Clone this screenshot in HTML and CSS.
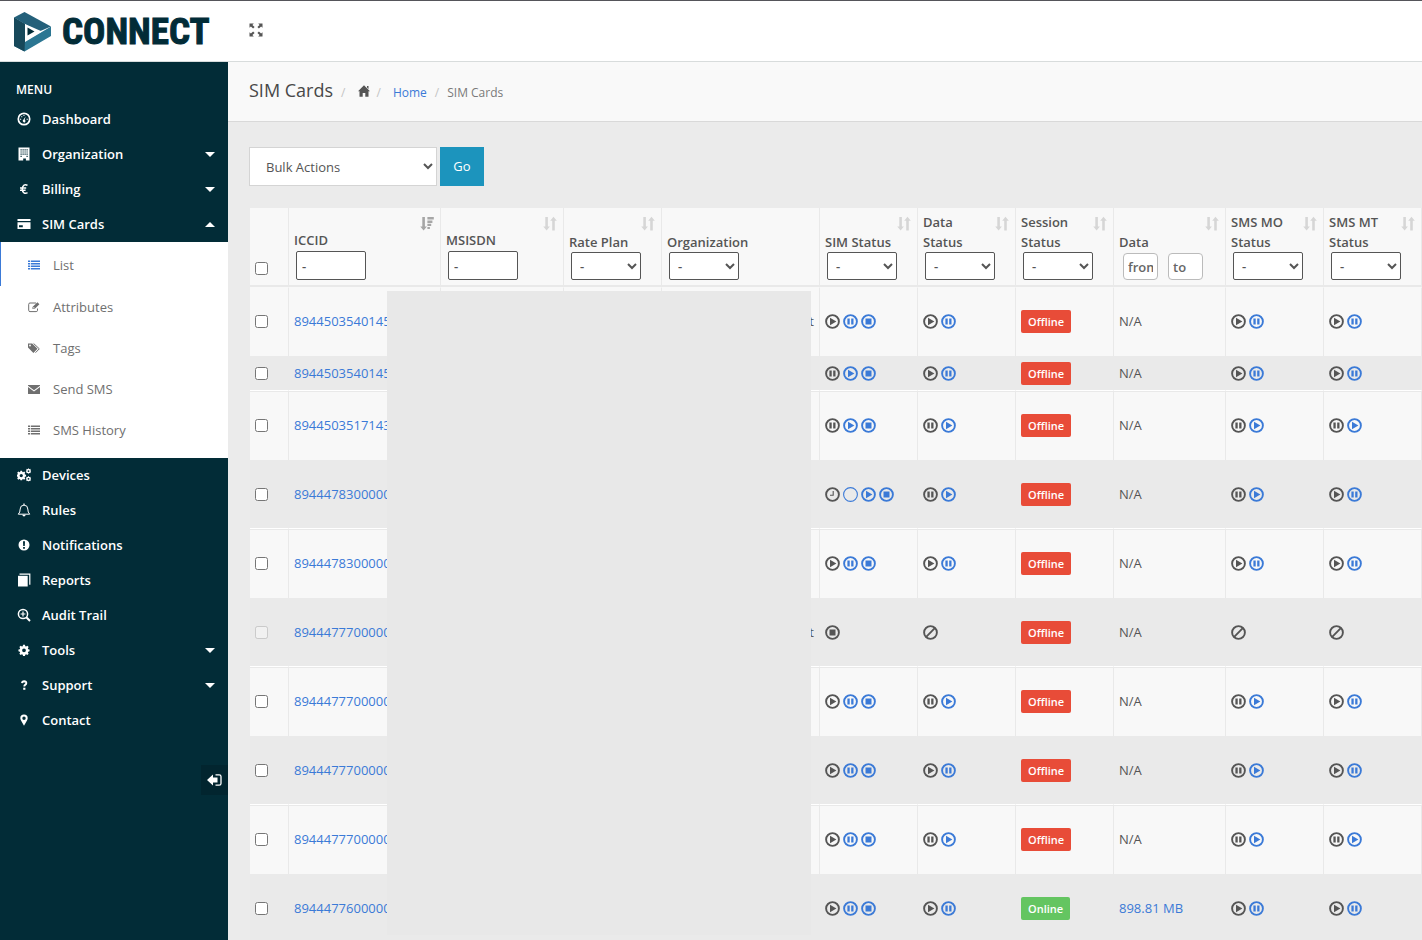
FILE: index.html
```html
<!DOCTYPE html>
<html lang="en">
<head>
<meta charset="utf-8">
<title>SIM Cards</title>
<link rel="stylesheet" href="styles.css">
</head>
<body>
<svg class="sprite" aria-hidden="true">
  <symbol id="play" viewBox="0 0 15 15"><circle cx="7.5" cy="7.5" r="6.4" fill="none" stroke="currentColor" stroke-width="1.9"/><path d="M5 3.8L11.4 7.5L5 11.2z"/></symbol>
  <symbol id="pause" viewBox="0 0 15 15"><circle cx="7.5" cy="7.5" r="6.4" fill="none" stroke="currentColor" stroke-width="1.9"/><path d="M4.4 4.6h2.3v5.8H4.4zM8.2 4.6h2.3v5.8H8.2z"/></symbol>
  <symbol id="stop" viewBox="0 0 15 15"><circle cx="7.5" cy="7.5" r="6.4" fill="none" stroke="currentColor" stroke-width="1.9"/><path d="M4.5 4.5h6v6h-6z"/></symbol>
  <symbol id="ring" viewBox="0 0 15 15"><circle cx="7.5" cy="7.5" r="6.9" fill="none" stroke="currentColor" stroke-width="1.1"/></symbol>
  <symbol id="clock" viewBox="0 0 15 15"><circle cx="7.5" cy="7.5" r="6.4" fill="none" stroke="currentColor" stroke-width="1.9"/><path d="M8.2 4v4.3H5" fill="none" stroke="currentColor" stroke-width="1.1"/></symbol>
  <symbol id="ban" viewBox="0 0 15 15"><circle cx="7.5" cy="7.5" r="6.4" fill="none" stroke="currentColor" stroke-width="1.9"/><path d="M3.2 11.8L11.8 3.2" stroke="currentColor" stroke-width="1.9"/></symbol>
  <symbol id="sort" viewBox="0 0 14 15"><path d="M2.3 1h2.6v9.6h2L3.6 14.6L.3 10.6h2zM9.2 14.4h2.6V4.8h2L10.5.8L7.2 4.8h2z"/></symbol>
  <symbol id="sorted" viewBox="0 0 14 15"><path d="M2.3 1h2.6v9.6h2L3.6 14.6L.3 10.6h2zM7.4 1h6.4v2.6H7.4zM7.4 4.4h5v2.5h-5zM7.4 7.7h3.8v2.4H7.4zM7.4 10.9h2.5v2.2H7.4z"/></symbol>
  <symbol id="list" viewBox="0 0 12 10"><path d="M0 .5h2v1.5H0zM0 3h2v1.5H0zM0 5.5h2V7H0zM0 8h2v1.5H0zM2.8.5H12V2H2.8zM2.8 3H12v1.5H2.8zM2.8 5.5H12V7H2.8zM2.8 8H12v1.5H2.8z"/></symbol>
  <symbol id="gear" viewBox="0 0 14 14"><path fill-rule="evenodd" d="M5.9 1h2.2l.4 1.6.9.4 1.5-.9 1.5 1.5-.9 1.5.4.9 1.6.4v2.2l-1.6.4-.4.9.9 1.5-1.5 1.5-1.5-.9-.9.4L8.100 14H5.900l-.4-1.600-.9-.4-1.500.9-1.500-1.500.9-1.500-.4-.9L.5 8.600V6.400L2.100 6l.4-.9-.9-1.500 1.500-1.500 1.500.9.9-.4zM7 5.200a2.200 2.200 0 1 0 0 4.400a2.200 2.200 0 0 0 0-4.400z"/></symbol>
</svg>

<header class="topbar">
  <a class="brand" href="#">
    <svg class="brand-mark" viewBox="0 0 37 40" aria-hidden="true">
      <path d="M0 5.500L10.500 0L37 14.500L24 20z" fill="#24607a"/>
      <path d="M0 5.500L11 12v18L37 14.500V24L10.500 39.500L0 34z" fill="#2b7692"/>
      <path d="M0 5.500L11 12v16.500L10.500 39.500L0 34z" fill="#17485a"/>
      <path d="M11 12L28 19.500L11 29z" fill="#fff"/>
      <path d="M13.500 15.500L20.500 19.500L13.500 23.500z" fill="#022c37"/>
    </svg>
    <span class="brand-name">CONNECT</span>
  </a>
  <button class="expand" type="button" aria-label="Full screen">
    <svg width="14" height="14" viewBox="0 0 14 14" aria-hidden="true"><path d="M.5.5h4.300L3.400 1.900L5.600 4.100L4.100 5.600L1.900 3.400L.5 4.800zM13.500.5v4.300L12.100 3.400L9.900 5.600L8.400 4.100L10.600 1.900L9.200.5zM.5 13.500V9.200L1.900 10.600L4.100 8.400L5.600 9.900L3.400 12.100L4.800 13.500zM13.500 13.500H9.200L10.600 12.100L8.400 9.900L9.900 8.400L12.100 10.600L13.500 9.200z"/></svg>
  </button>
</header>

<div class="shell">
  <nav class="sidebar">
    <p class="menu-title">MENU</p>
    <a class="item" href="#"><svg viewBox="0 0 14 14"><circle cx="7" cy="7" r="5.700" fill="none" stroke="currentColor" stroke-width="1.700"/><path d="M6.200 9.700a1.200 1.200 0 1 0 1.500-1.700L8.600 4.300L6.700 7.600a1.200 1.200 0 0 0-.5 2.100z"/><path d="M3 6.800h1.200v1H3zM4.200 4.200h1.100v1.100H4.200zM6.400 3h1.100v1H6.400zM9.600 6.800h1.200v1H9.600z"/></svg><span>Dashboard</span></a>
    <a class="item" href="#"><svg viewBox="0 0 14 14"><path fill-rule="evenodd" d="M1.500.5h11v13h-3.600v-2H6.200v2H1.500zM3.500 2.200v1.200h1.200V2.200zM5.500 2.200v1.200h1.200V2.200zM7.500 2.200v1.200h1.200V2.200zM9.500 2.200v1.200h1.200V2.200zM3.500 4.400v1.200h1.200V4.400zM5.500 4.400v1.200h1.200V4.400zM7.500 4.400v1.200h1.200V4.400zM9.500 4.400v1.200h1.200V4.400zM3.500 6.600v1.200h1.200V6.600zM5.500 6.600v1.200h1.200V6.600zM7.500 6.600v1.200h1.200V6.600zM9.500 6.600v1.200h1.200V6.600zM3.500 8.800V10h1.200V8.800zM9.500 8.800V10h1.200V8.800z"/></svg><span>Organization</span><i class="caret"></i></a>
    <a class="item" href="#"><svg viewBox="0 0 14 14"><path d="M10.500 3.400C8 1.700 5.600 3 5.200 6.900C5.400 11 8 12.200 10.500 10.700M3 5.900h6.200M3 8.200h5.600" fill="none" stroke="currentColor" stroke-width="1.500"/></svg><span>Billing</span><i class="caret"></i></a>
    <a class="item" href="#"><svg viewBox="0 0 14 14"><path fill-rule="evenodd" d="M.5 2h13v2H.5zM.5 5.300h13V12H.5zM2 8.300v2h3.800v-2z"/></svg><span>SIM Cards</span><i class="caret up"></i></a>
    <div class="submenu">
      <a class="sub active" href="#"><svg viewBox="0 0 12 12"><use href="#list" y="1" width="12" height="10"/></svg><span>List</span></a>
      <a class="sub" href="#"><svg viewBox="0 0 12 12"><path d="M8 2H2Q.7 2 .7 3.300v6Q.7 10.600 2 10.600h6.200q1.300 0 1.300-1.300V7.500" fill="none" stroke="currentColor"/><path fill-rule="evenodd" d="M4.500 6L9.400 1.200l2 2L6.600 8.100H4.500zM5.300 6.400v1h1l.5-.5-1-1z"/></svg><span>Attributes</span></a>
      <a class="sub" href="#"><svg viewBox="0 0 12 12"><path fill-rule="evenodd" d="M0 1.500h4.200L9.500 6.700L5.400 10.900L0 5.600zM2 2.600a.9.9 0 1 0 0 1.800a.9.900 0 0 0 0-1.800z"/><path d="M5.600 1.500l5.700 5.300L7.500 10.700" fill="none" stroke="currentColor"/></svg><span>Tags</span></a>
      <a class="sub" href="#"><svg viewBox="0 0 12 12"><path d="M0 2h12v.8L6 7.200L0 2.800zM0 4l6 4.400L12 4v6.500q0 .5-.5.500H.5Q0 11 0 10.500z"/></svg><span>Send SMS</span></a>
      <a class="sub" href="#"><svg viewBox="0 0 12 12"><use href="#list" y="1" width="12" height="10"/></svg><span>SMS History</span></a>
    </div>
    <a class="item" href="#"><svg viewBox="0 0 14 14"><use href="#gear" x="-1" y="2" width="10.500" height="10.500"/><use href="#gear" x="8.600" y="0" width="5.800" height="5.800"/><use href="#gear" x="8.600" y="7.800" width="5.800" height="5.800"/></svg><span>Devices</span></a>
    <a class="item" href="#"><svg viewBox="0 0 14 14"><path d="M1.300 11.200Q3.200 9.500 3.200 6Q3.200 2.300 7 2.100Q10.800 2.300 10.800 6Q10.800 9.500 12.700 11.200z" fill="none" stroke="currentColor"/><path d="M6.400.6h1.200v1.600H6.400zM5.300 11.700h3.400Q8.400 13.400 7 13.400T5.300 11.700z"/></svg><span>Rules</span></a>
    <a class="item" href="#"><svg viewBox="0 0 14 14"><path fill-rule="evenodd" d="M7 1.500a5.500 5.500 0 1 0 0 11a5.500 5.500 0 0 0 0-11zM6 3.200h2L7.800 8H6.200zM6.100 9h1.800v1.700H6.100z"/></svg><span>Notifications</span></a>
    <a class="item" href="#"><svg viewBox="0 0 14 14"><path d="M1 2.800h9.700v10.700H1z"/><path d="M2.500 1.200h10.300v10.600" fill="none" stroke="currentColor" stroke-width="1.200"/></svg><span>Reports</span></a>
    <a class="item" href="#"><svg viewBox="0 0 14 14"><circle cx="6" cy="6" r="4.600" fill="none" stroke="currentColor" stroke-width="1.500"/><path d="M9.300 9.300L13 13" stroke="currentColor" stroke-width="2"/><path d="M6 3.600v4.800M3.600 6h4.800" stroke="currentColor" stroke-width="1.200"/></svg><span>Audit Trail</span></a>
    <a class="item" href="#"><svg viewBox="0 0 14 14"><use href="#gear" x="1" y="1" width="12" height="12"/></svg><span>Tools</span><i class="caret"></i></a>
    <a class="item" href="#"><svg viewBox="0 0 14 14"><path d="M5 5.100Q5.200 3.300 7.200 3.300Q9.400 3.400 9.300 5.100Q9.200 6.200 8.100 6.900Q7.300 7.400 7.300 8.600" fill="none" stroke="currentColor" stroke-width="1.900"/><path d="M6.200 9.700h2.200v2.100H6.200z"/></svg><span>Support</span><i class="caret"></i></a>
    <a class="item" href="#"><svg viewBox="0 0 14 14"><path fill-rule="evenodd" d="M7 1.500a3.700 3.700 0 0 0-3.700 3.700Q3.300 6.300 4 7.500L7 12.700L10 7.500q.7-1.200.7-2.300A3.700 3.700 0 0 0 7 1.500zM7 3.500a1.700 1.700 0 1 1 0 3.400a1.700 1.700 0 0 1 0-3.400z"/></svg><span>Contact</span></a>
    <button class="collapse" type="button" aria-label="Collapse menu"><svg width="15" height="12" viewBox="0 0 15 12" aria-hidden="true"><path d="M0 6L6 .5v3h4.500v5H6v3z"/><path d="M8.500.8h3.700q1.800 0 1.800 1.800v6.800q0 1.800-1.800 1.800H8.500" fill="none" stroke="currentColor" stroke-width="1.300"/></svg></button>
  </nav>

  <main class="main">
    <div class="heading">
      <h1>SIM Cards</h1>
      <nav class="crumbs">
        <span class="sep">/</span>
        <svg class="home" width="12" height="12" viewBox="0 0 12 12" aria-hidden="true"><path d="M6 .3L12 6.300H10.500V11.700H7.300V8H4.700v3.700H1.500V6.300H0zM9 1h1.500v3L9 2.500z"/></svg>
        <span class="sep">/</span>
        <a class="home-link" href="#">Home</a>
        <span class="sep">/</span>
        <span>SIM Cards</span>
      </nav>
    </div>

    <div class="content">
      <form class="bulk">
        <select aria-label="Bulk Actions"><option>Bulk Actions</option></select>
        <button type="button">Go</button>
      </form>

      <div class="table-wrap">
      <table>
        <colgroup><col class="c-check"><col class="c-iccid"><col class="c-msisdn"><col class="c-std"><col class="c-org"><col class="c-std"><col class="c-std"><col class="c-std"><col class="c-data"><col class="c-std"><col class="c-std"></colgroup>
        <thead>
          <tr>
            <th><input class="all" type="checkbox" aria-label="All"></th>
            <th><div class="head short"><label for="f1">ICCID</label><svg class="on"><use href="#sorted"/></svg></div><input id="f1" class="text" value="-"></th>
            <th><div class="head short"><label for="f2">MSISDN</label><svg><use href="#sort"/></svg></div><input id="f2" class="text" value="-"></th>
            <th><div class="head"><label for="f3">Rate Plan</label><svg><use href="#sort"/></svg></div><select id="f3"><option>-</option></select></th>
            <th><div class="head"><label for="f4">Organization</label></div><select id="f4"><option>-</option></select></th>
            <th><div class="head"><label for="f5">SIM Status</label><svg><use href="#sort"/></svg></div><select id="f5"><option>-</option></select></th>
            <th><div class="head"><label for="f6">Data<br>Status</label><svg><use href="#sort"/></svg></div><select id="f6"><option>-</option></select></th>
            <th><div class="head"><label for="f7">Session<br>Status</label><svg><use href="#sort"/></svg></div><select id="f7"><option>-</option></select></th>
            <th><div class="head"><label for="f8">Data</label><svg><use href="#sort"/></svg></div><div class="range"><input id="f8" placeholder="from"><input aria-label="to" placeholder="to"></div></th>
            <th><div class="head"><label for="f9">SMS MO<br>Status</label><svg><use href="#sort"/></svg></div><select id="f9"><option>-</option></select></th>
            <th><div class="head"><label for="f10">SMS MT<br>Status</label><svg><use href="#sort"/></svg></div><select id="f10"><option>-</option></select></th>
          </tr>
        </thead>
        <tbody>
          <tr>
            <td><input type="checkbox" aria-label="8944503540145"></td><td><a href="#">8944503540145</a></td><td></td><td></td><td class="org">t</td>
            <td><div class="acts"><svg><use href="#play"/></svg><svg class="b"><use href="#pause"/></svg><svg class="b"><use href="#stop"/></svg></div></td>
            <td><div class="acts"><svg><use href="#play"/></svg><svg class="b"><use href="#pause"/></svg></div></td>
            <td><span class="badge">Offline</span></td><td>N/A</td>
            <td><div class="acts"><svg><use href="#play"/></svg><svg class="b"><use href="#pause"/></svg></div></td>
            <td><div class="acts"><svg><use href="#play"/></svg><svg class="b"><use href="#pause"/></svg></div></td>
          </tr>
          <tr class="low">
            <td><input type="checkbox" aria-label="8944503540145"></td><td><a href="#">8944503540145</a></td><td></td><td></td><td></td>
            <td><div class="acts"><svg><use href="#pause"/></svg><svg class="b"><use href="#play"/></svg><svg class="b"><use href="#stop"/></svg></div></td>
            <td><div class="acts"><svg><use href="#play"/></svg><svg class="b"><use href="#pause"/></svg></div></td>
            <td><span class="badge">Offline</span></td><td>N/A</td>
            <td><div class="acts"><svg><use href="#play"/></svg><svg class="b"><use href="#pause"/></svg></div></td>
            <td><div class="acts"><svg><use href="#play"/></svg><svg class="b"><use href="#pause"/></svg></div></td>
          </tr>
          <tr>
            <td><input type="checkbox" aria-label="8944503517143"></td><td><a href="#">8944503517143</a></td><td></td><td></td><td></td>
            <td><div class="acts"><svg><use href="#pause"/></svg><svg class="b"><use href="#play"/></svg><svg class="b"><use href="#stop"/></svg></div></td>
            <td><div class="acts"><svg><use href="#pause"/></svg><svg class="b"><use href="#play"/></svg></div></td>
            <td><span class="badge">Offline</span></td><td>N/A</td>
            <td><div class="acts"><svg><use href="#pause"/></svg><svg class="b"><use href="#play"/></svg></div></td>
            <td><div class="acts"><svg><use href="#pause"/></svg><svg class="b"><use href="#play"/></svg></div></td>
          </tr>
          <tr>
            <td><input type="checkbox" aria-label="8944478300000"></td><td><a href="#">8944478300000</a></td><td></td><td></td><td></td>
            <td><div class="acts"><svg><use href="#clock"/></svg><svg class="b"><use href="#ring"/></svg><svg class="b"><use href="#play"/></svg><svg class="b"><use href="#stop"/></svg></div></td>
            <td><div class="acts"><svg><use href="#pause"/></svg><svg class="b"><use href="#play"/></svg></div></td>
            <td><span class="badge">Offline</span></td><td>N/A</td>
            <td><div class="acts"><svg><use href="#pause"/></svg><svg class="b"><use href="#play"/></svg></div></td>
            <td><div class="acts"><svg><use href="#play"/></svg><svg class="b"><use href="#pause"/></svg></div></td>
          </tr>
          <tr>
            <td><input type="checkbox" aria-label="8944478300000"></td><td><a href="#">8944478300000</a></td><td></td><td></td><td></td>
            <td><div class="acts"><svg><use href="#play"/></svg><svg class="b"><use href="#pause"/></svg><svg class="b"><use href="#stop"/></svg></div></td>
            <td><div class="acts"><svg><use href="#play"/></svg><svg class="b"><use href="#pause"/></svg></div></td>
            <td><span class="badge">Offline</span></td><td>N/A</td>
            <td><div class="acts"><svg><use href="#play"/></svg><svg class="b"><use href="#pause"/></svg></div></td>
            <td><div class="acts"><svg><use href="#play"/></svg><svg class="b"><use href="#pause"/></svg></div></td>
          </tr>
          <tr>
            <td><input type="checkbox" disabled aria-label="8944477700000"></td><td><a href="#">8944477700000</a></td><td></td><td></td><td class="org">t</td>
            <td><div class="acts"><svg><use href="#stop"/></svg></div></td>
            <td><div class="acts"><svg><use href="#ban"/></svg></div></td>
            <td><span class="badge">Offline</span></td><td>N/A</td>
            <td><div class="acts"><svg><use href="#ban"/></svg></div></td>
            <td><div class="acts"><svg><use href="#ban"/></svg></div></td>
          </tr>
          <tr>
            <td><input type="checkbox" aria-label="8944477700000"></td><td><a href="#">8944477700000</a></td><td></td><td></td><td></td>
            <td><div class="acts"><svg><use href="#play"/></svg><svg class="b"><use href="#pause"/></svg><svg class="b"><use href="#stop"/></svg></div></td>
            <td><div class="acts"><svg><use href="#pause"/></svg><svg class="b"><use href="#play"/></svg></div></td>
            <td><span class="badge">Offline</span></td><td>N/A</td>
            <td><div class="acts"><svg><use href="#pause"/></svg><svg class="b"><use href="#play"/></svg></div></td>
            <td><div class="acts"><svg><use href="#play"/></svg><svg class="b"><use href="#pause"/></svg></div></td>
          </tr>
          <tr>
            <td><input type="checkbox" aria-label="8944477700000"></td><td><a href="#">8944477700000</a></td><td></td><td></td><td></td>
            <td><div class="acts"><svg><use href="#play"/></svg><svg class="b"><use href="#pause"/></svg><svg class="b"><use href="#stop"/></svg></div></td>
            <td><div class="acts"><svg><use href="#play"/></svg><svg class="b"><use href="#pause"/></svg></div></td>
            <td><span class="badge">Offline</span></td><td>N/A</td>
            <td><div class="acts"><svg><use href="#pause"/></svg><svg class="b"><use href="#play"/></svg></div></td>
            <td><div class="acts"><svg><use href="#play"/></svg><svg class="b"><use href="#pause"/></svg></div></td>
          </tr>
          <tr>
            <td><input type="checkbox" aria-label="8944477700000"></td><td><a href="#">8944477700000</a></td><td></td><td></td><td></td>
            <td><div class="acts"><svg><use href="#play"/></svg><svg class="b"><use href="#pause"/></svg><svg class="b"><use href="#stop"/></svg></div></td>
            <td><div class="acts"><svg><use href="#pause"/></svg><svg class="b"><use href="#play"/></svg></div></td>
            <td><span class="badge">Offline</span></td><td>N/A</td>
            <td><div class="acts"><svg><use href="#pause"/></svg><svg class="b"><use href="#play"/></svg></div></td>
            <td><div class="acts"><svg><use href="#pause"/></svg><svg class="b"><use href="#play"/></svg></div></td>
          </tr>
          <tr>
            <td><input type="checkbox" aria-label="8944477600000"></td><td><a href="#">8944477600000</a></td><td></td><td></td><td></td>
            <td><div class="acts"><svg><use href="#play"/></svg><svg class="b"><use href="#pause"/></svg><svg class="b"><use href="#stop"/></svg></div></td>
            <td><div class="acts"><svg><use href="#play"/></svg><svg class="b"><use href="#pause"/></svg></div></td>
            <td><span class="badge online">Online</span></td><td><a href="#">898.81 MB</a></td>
            <td><div class="acts"><svg><use href="#play"/></svg><svg class="b"><use href="#pause"/></svg></div></td>
            <td><div class="acts"><svg><use href="#play"/></svg><svg class="b"><use href="#pause"/></svg></div></td>
          </tr>
        </tbody>
      </table>
      <div class="cover"></div>
      </div>
    </div>
  </main>
</div>
</body>
</html>
```

FILE: styles.css
```css
* { box-sizing: border-box; }

body {
  margin: 0;
  height: 100vh;
  overflow: hidden;
  display: flex;
  flex-direction: column;
  background: #ebebeb;
  color: #555;
  font: 13px/20px "Open Sans", "Noto Sans", sans-serif;
}

a { color: #3b7ad7; text-decoration: none; }
svg { fill: currentColor; flex: none; }
button, input, select { font: inherit; color: inherit; }
button { border: 0; cursor: pointer; }
.sprite { position: absolute; width: 0; height: 0; }

/* Top bar */
.topbar {
  flex: none;
  display: flex;
  align-items: center;
  height: 62px;
  border-top: 1px solid #55555a;
  border-bottom: 1px solid #d8dcdc;
  background: #fff;
}
.brand {
  display: flex;
  align-items: center;
  gap: 11px;
  width: 228px;
  padding: 2px 0 0 14px;
  color: #022c37;
}
.brand-mark { width: 37px; height: 40px; }
.brand-name {
  font: bold 37px/40px "Liberation Sans Narrow", "Roboto Condensed", "DejaVu Sans Condensed", sans-serif;
  -webkit-text-stroke: 1px #022c37;
}
.expand {
  display: flex;
  margin-left: 21px;
  padding: 0 0 2px;
  background: none;
  color: #555;
}

/* Sidebar */
.shell { flex: 1; display: flex; min-height: 0; }
.sidebar {
  flex: none;
  display: flex;
  flex-direction: column;
  width: 228px;
  background: #022c37;
  color: #fff;
}
.menu-title { margin: 18px 0 2px 16px; font-size: 12px; font-weight: 600; }
.item {
  display: flex;
  align-items: center;
  height: 35px;
  padding: 0 13px 2px 17px;
  color: #fff;
  font-weight: 600;
}
.item svg { width: 14px; height: 14px; margin-right: 11px; }
.caret {
  margin: 2px 0 0 auto;
  border: 5px solid transparent;
  border-top-color: #fff;
  border-bottom: 0;
}
.caret.up { border-top: 0; border-bottom: 5px solid #fff; }
.submenu { padding-bottom: 8px; background: #fff; }
.sub {
  display: flex;
  align-items: center;
  height: 41px;
  padding-left: 28px;
  color: #6f6f6f;
}
.sub svg { width: 12px; height: 12px; margin-right: 13px; }
.sub.active { height: 44px; padding: 2px 0 0 27px; border-left: 1px solid #3b7ad7; }
.sub.active svg { color: #3b7ad7; }
.collapse {
  display: flex;
  align-items: center;
  justify-content: center;
  align-self: flex-end;
  width: 27px;
  height: 30px;
  margin-top: 27px;
  padding: 0;
  background: #02252f;
  color: #fff;
}

/* Page heading */
.main { flex: 1; min-width: 0; overflow: hidden; }
.heading {
  display: flex;
  align-items: baseline;
  gap: 8px;
  height: 60px;
  padding: 16px 21px 0;
  border-bottom: 1px solid #d9d9d9;
  background: #f9f9f9;
}
h1 { margin: 0; color: #484848; font-size: 18px; font-weight: 400; line-height: 24px; }
.crumbs { display: flex; align-items: baseline; gap: 8px; color: #7a7a7a; font-size: 12px; }
.sep { color: #c4c4c4; }
.home { margin: 0 -2px 0 5px; color: #555; }
.home-link { margin-left: 4px; }

/* Bulk actions */
.content { padding: 25px 0 0 21px; }
.bulk { display: flex; gap: 3px; margin-bottom: 22px; }
.bulk select {
  width: 188px;
  height: 39px;
  padding: 0 12px;
  border: 1px solid #d4d4d4;
  border-radius: 0;
  background: #fff;
}
.bulk button { width: 44px; height: 39px; padding: 0 0 2px; background: #1c94bd; color: #fff; }

/* Table */
.table-wrap { position: relative; padding-left: 1px; }
table { width: 100%; table-layout: fixed; border-spacing: 0; }
.c-check { width: 39px; }
.c-iccid { width: 152px; }
.c-msisdn { width: 123px; }
.c-org { width: 158px; }
.c-data { width: 112px; }
.c-std { width: 98px; }
th, td { padding: 0 5px; border-right: 1px solid #e9e9e9; text-align: left; white-space: nowrap; }
th {
  height: 79px;
  padding: 4px 5px 5px;
  border-bottom: 2px solid #e9e9e9;
  background: #f8f8f8;
  font-weight: 600;
  vertical-align: bottom;
}
td { height: 69px; padding-bottom: 2px; border-top: 1px solid #e9e9e9; background: #f8f8f8; }
tbody tr:first-child td { border-top-color: #f8f8f8; }
.low td { height: 35px; }
tbody tr:nth-child(even) td {
  padding-bottom: 1px;
  border-color: #eaeaea;
  border-bottom: 1px solid #fff;
  background: #eaeaea;
}
.org { text-align: right; }

.head { display: flex; align-items: flex-end; justify-content: space-between; height: 40px; }
.head.short { height: 38px; margin-bottom: 1px; }
.head svg { align-self: flex-start; width: 14px; height: 15px; margin: 4px 1px 0 0; color: #d6d6d6; }
.head svg.on { color: #a6a6a6; }
th select, th .text {
  display: block;
  width: 70px;
  height: 28px;
  margin-left: 2px;
  padding: 0 4px;
  border: 1px solid #555;
  border-radius: 2px;
  background: #fff;
}
th .text { height: 29px; padding: 0 5px; }
.range { display: flex; gap: 10px; padding: 1px 0 0 4px; }
.range input {
  width: 35px;
  height: 27px;
  padding: 0 4px;
  border: 1px solid #bbb;
  border-radius: 4px;
  background: #fff;
  font-weight: 600;
}
.range input::placeholder { color: #666; opacity: 1; }
input[type="checkbox"] { display: block; margin: 0; }
th .all { margin-bottom: 5px; }

.acts { display: flex; gap: 3px; }
.acts svg { width: 15px; height: 15px; }
.acts .b { color: #3b7ad7; }
.badge {
  display: inline-block;
  padding: 2px 7px 1px;
  border-radius: 2px;
  background: #e84c38;
  color: #fff;
  font-size: 11px;
  font-weight: 600;
}
.badge.online { background: #64c561; }

/* Panel covering the private columns */
.cover {
  position: absolute;
  left: 138px;
  top: 83px;
  width: 424px;
  height: 644px;
  background: #e8e8e8;
}
```
